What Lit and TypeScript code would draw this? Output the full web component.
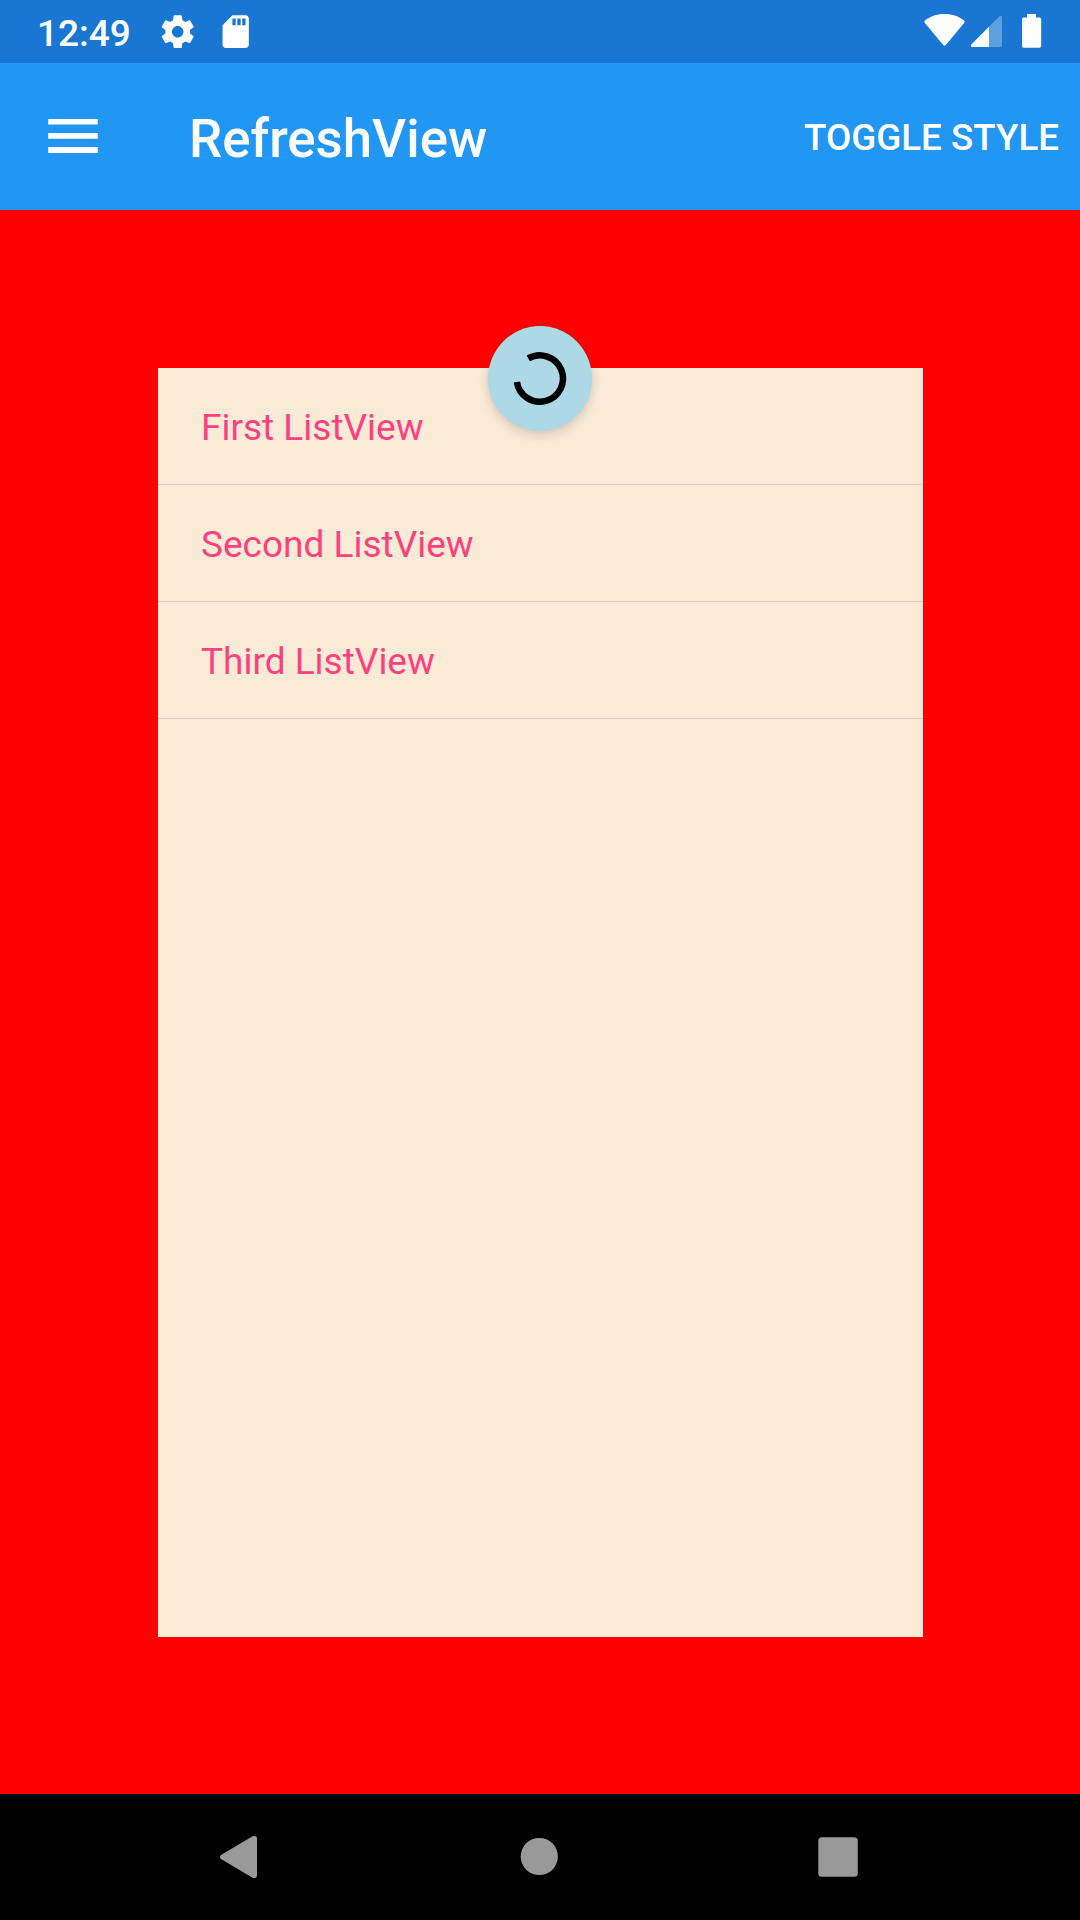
import { LitElement, html, css } from "lit";
import { customElement, property } from "lit/decorators.js";

@customElement("status-bar")
class StatusBar extends LitElement {
  static styles = css`
    :host { display: flex; align-items: flex-start; height: 63px; background: #1976d2; color: #fff; box-sizing: border-box; padding-left: 37px; padding-right: 37px; }
    .clock { font: 500 37px/43px Roboto, sans-serif; width: 93px; padding-top: 12px; white-space: nowrap; }
    .icon { display: block; flex: none; fill: currentColor; margin-top: 12px; }
    .gear { margin-left: 28px; }
    .card { margin-left: 19px; }
    .space { flex: 1; }
    .dim { opacity: 0.3; }
  `;
  render() {
    return html`
      <span class="clock">12:49</span>
      <svg class="icon gear" width="39.4" height="39.4" viewBox="0 0 24 24">
        <path d="M19.43 12.98c.04-.32.07-.64.07-.98s-.03-.66-.07-.98l2.11-1.65c.19-.15.24-.42.12-.64l-2-3.46c-.12-.22-.39-.3-.61-.22l-2.49 1c-.52-.4-1.08-.73-1.69-.98l-.38-2.65C14.46 2.18 14.25 2 14 2h-4c-.25 0-.46.18-.49.42l-.38 2.65c-.61.25-1.17.59-1.69.98l-2.49-1c-.23-.09-.49 0-.61.22l-2 3.46c-.13.22-.07.49.12.64l2.11 1.65c-.04.32-.07.65-.07.98s.03.66.07.98l-2.11 1.65c-.19.15-.24.42-.12.64l2 3.46c.12.22.39.3.61.22l2.49-1c.52.4 1.08.73 1.69.98l.38 2.65c.03.24.24.42.49.42h4c.25 0 .46-.18.49-.42l.38-2.65c.61-.25 1.17-.59 1.69-.98l2.49 1c.23.09.49 0 .61-.22l2-3.46c.12-.22.07-.49-.12-.64l-2.11-1.65zM12 15.5c-1.93 0-3.5-1.57-3.5-3.5s1.57-3.5 3.5-3.5 3.5 1.57 3.5 3.5-1.57 3.5-3.5 3.5z"/>
      </svg>
      <svg class="icon card" width="39.4" height="39.4" viewBox="0 0 24 24">
        <path d="M18 2h-8L4.02 8 4 20c0 1.1.9 2 2 2h12c1.1 0 2-.9 2-2V4c0-1.1-.9-2-2-2zm-6 6h-2V4h2v4zm3 0h-2V4h2v4zm3 0h-2V4h2v4z"/>
      </svg>
      <span class="space"></span>
      <svg class="icon" width="123" height="40" viewBox="920 12 123 40">
        <path d="M944.5 14C936.500 14 929.500 16.700 924.800 20.800Q923.900 21.700 924.700 22.700L943.200 45.100Q944.500 46.400 945.800 45.100L964.300 22.700Q965.100 21.700 964.200 20.800C959.500 16.700 952.500 14 944.500 14Z"/>
        <path class="dim" d="M989 26.800L999.600 16.300Q1002 14.500 1002 17.500V45Q1002 47 1000 47H989Z"/>
        <path d="M989 26.800V47H972.500Q970 46.500 971.300 44.500Z"/>
        <path d="M1027 14H1036V17.600H1039.500Q1041.200 17.600 1041.200 19.300V46Q1041.200 47.800 1039.400 47.800H1023.800Q1022 47.800 1022 46V19.300Q1022 17.600 1023.700 17.600H1027Z"/>
      </svg>
    `;
  }
}

@customElement("tool-bar")
class ToolBar extends LitElement {
  @property() heading = "";
  @property() action = "";
  static styles = css`
    :host { display: flex; align-items: center; height: 147px; background: #2196f3; color: #fff; box-sizing: border-box; padding: 0 21px 0 48px; font-family: Roboto, sans-serif; font-weight: 500; white-space: nowrap; }
    .menu { display: block; fill: currentColor; margin-top: -2px; }
    .heading { font-size: 52.8px; line-height: 62px; margin-left: 91px; padding-top: 5px; flex: 1; }
    .action { font-size: 36.75px; line-height: 43px; padding-top: 1px; }
  `;
  render() {
    return html`
      <svg class="menu" width="50" height="36" viewBox="0 0 50 36">
        <path d="M.2 1H49.700v5.600H.2zM.2 15H49.700v5.800H.2zM.2 29H49.700v5.900H.2z"/>
      </svg>
      <span class="heading">${this.heading}</span>
      <span class="action">${this.action}</span>
    `;
  }
}

@customElement("refresh-list")
class RefreshList extends LitElement {
  @property({ attribute: false }) items: string[] = [];
  static styles = css`
    :host { display: block; position: relative; background: #faebd7; }
    .row { height: 117px; box-sizing: border-box; border-bottom: 1px solid #dcccba; padding: 2px 43px 0; display: flex; align-items: center; color: #ff4081; font: 400 37px/43px Roboto, sans-serif; }
    .spinner { position: absolute; left: 50%; top: -42px; margin-left: -52.5px; width: 104px; height: 105px; border-radius: 50%; background: #add8e6; box-shadow: 0 4px 12px rgba(0, 0, 0, 0.14), 0 0 5px rgba(0, 0, 0, 0.06); }
    .arc { display: block; fill: none; stroke: #000; stroke-width: 6.5; }
  `;
  render() {
    return html`
      ${this.items.map((item) => html`<div class="row">${item}</div>`)}
      <div class="spinner">
        <svg class="arc" width="104" height="105" viewBox="-52 -52.5 104 105">
          <path d="M-11.700 -20.100A23.160 23.160 0 1 1 -23.100 3.450"/>
        </svg>
      </div>
    `;
  }
}

@customElement("nav-bar")
class NavBar extends LitElement {
  static styles = css`
    :host { display: flex; align-items: center; height: 126px; background: #000; box-sizing: border-box; padding: 0 221px 0 219px; justify-content: space-between; }
    .key { display: block; fill: #999; }
  `;
  render() {
    return html`
      <svg class="key" width="40" height="44" viewBox="0 0 40 44">
        <path d="M2 20L33.500 1.300Q37.900 0 38 3.800V40.200Q37.900 44 33.500 42.700L2 24Q0 22 2 20Z"/>
      </svg>
      <svg class="key" width="40" height="40" viewBox="0 0 40 40"><circle cx="21.300" cy="19.500" r="18.600"/></svg>
      <svg class="key" width="42" height="42" viewBox="0 0 42 42"><rect x="1.300" y="1.300" width="39.500" height="39.500" rx="3.500"/></svg>
    `;
  }
}

@customElement("app-root")
class AppRoot extends LitElement {
  static styles = css`
    :host { display: flex; flex-direction: column; width: 1080px; height: 1920px; overflow: hidden; background: #000; }
    .page { flex: 1; display: flex; background: #f00; padding: 158px 157px 157px 158px; }
    .list { flex: 1; }
  `;
  private items = ["First ListView", "Second ListView", "Third ListView"];
  render() {
    return html`
      <status-bar></status-bar>
      <tool-bar heading="RefreshView" action="TOGGLE STYLE"></tool-bar>
      <main class="page"><refresh-list class="list" .items=${this.items}></refresh-list></main>
      <nav-bar></nav-bar>
    `;
  }
}
